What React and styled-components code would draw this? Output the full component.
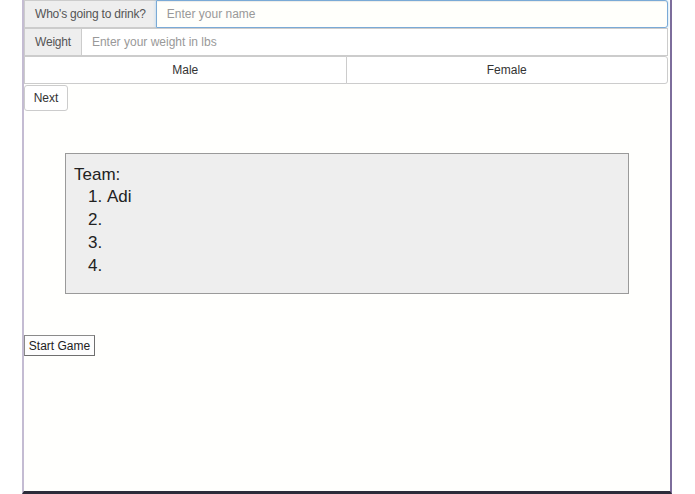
import styled, { createGlobalStyle } from "styled-components";

const GlobalStyle = createGlobalStyle`
  html, body {
    margin: 0;
    padding: 0;
    background: #ffffff;
    font-family: "Liberation Sans", Arial, sans-serif;
  }
`

const Frame = styled.div`
  box-sizing: border-box;
  margin-left: 22px;
  width: 650px;
  height: 494px;
  border-left: 2px solid #c4bcd2;
  border-right: 2px solid #7d6d9c;
  border-bottom: 3px solid #2c2c3a;
  background: #fffffd;
  display: flex;
  flex-direction: column;
`

const InputGroup = styled.div`
  display: flex;
  height: 28px;
  width: 644px;
`

const Addon = styled.span`
  box-sizing: border-box;
  display: flex;
  align-items: center;
  padding: 0 10px;
  background: #eeeeee;
  border: 1px solid #cccccc;
  border-right: none;
  color: #555555;
  font-size: 12px;
  letter-spacing: -0.2px;
  white-space: nowrap;
`

const TextInput = styled.input`
  box-sizing: border-box;
  flex: 1;
  height: 28px;
  padding: 0 10px;
  font-family: "Liberation Sans", Arial, sans-serif;
  font-size: 12px;
  color: #555;
  background: ${p => (p.$focus ? "#fffffb" : "#ffffff")};
  border: 1px solid ${p => (p.$focus ? "#7aaad6" : "#cccccc")};
  border-radius: ${p => (p.$focus ? "0 3px 3px 0" : "0")};
  box-shadow: ${p => (p.$focus ? "inset 0 1px 1px rgba(0,0,0,.075), 0 0 3px rgba(102,175,233,.5)" : "none")};
  outline: none;

  &::placeholder {
    color: #999999;
  }
`

const Toggle = styled.div`
  display: flex;
  width: 644px;
  height: 28px;
`

const ToggleButton = styled.button`
  box-sizing: border-box;
  flex: 1;
  height: 28px;
  background: #ffffff;
  border: 1px solid #cccccc;
  border-radius: ${p => (p.$last ? "0 3px 3px 0" : "0")};
  margin-left: ${p => (p.$last ? "-1px" : "0")};
  color: #333333;
  font-family: "Liberation Sans", Arial, sans-serif;
  font-size: 12px;
`

const NextButton = styled.button`
  box-sizing: border-box;
  align-self: flex-start;
  margin-top: 1px;
  width: 44px;
  height: 26px;
  padding: 0;
  background: #ffffff;
  border: 1px solid #cccccc;
  border-radius: 3px;
  color: #333333;
  font-family: "Liberation Sans", Arial, sans-serif;
  font-size: 12px;
`

const TeamBox = styled.div`
  box-sizing: border-box;
  margin: 42px 41px 0 41px;
  height: 141px;
  padding: 10px 8px;
  background: #eeeeee;
  border: 1px solid #9a9a9a;
  color: #222222;
  font-size: 17px;
`

const TeamTitle = styled.div`
  line-height: 21px;
`

const TeamList = styled.ol`
  margin: 0;
  padding-left: 33px;

  li {
    line-height: 23px;
  }
`

const StartButton = styled.button`
  box-sizing: border-box;
  align-self: flex-start;
  margin-top: 41px;
  width: 71px;
  height: 21px;
  padding: 0;
  background: #fdfdfd;
  border: 1px solid #8a8a8a;
  border-right-color: #6f6f6f;
  border-bottom-color: #6f6f6f;
  color: #222222;
  font-family: "Liberation Sans", Arial, sans-serif;
  font-size: 12px;
`

const team = ["Adi", "", "", ""]

function App() {
    return (
        <>
            <GlobalStyle/>
            <Frame>
                <InputGroup>
                    <Addon>Who's going to drink?</Addon>
                    <TextInput $focus placeholder="Enter your name"/>
                </InputGroup>
                <InputGroup>
                    <Addon>Weight</Addon>
                    <TextInput placeholder="Enter your weight in lbs"/>
                </InputGroup>
                <Toggle>
                    <ToggleButton>Male</ToggleButton>
                    <ToggleButton $last>Female</ToggleButton>
                </Toggle>
                <NextButton>Next</NextButton>
                <TeamBox>
                    <TeamTitle>Team:</TeamTitle>
                    <TeamList>
                        {team.map((name, i) => (
                            <li key={i}>{name}</li>
                        ))}
                    </TeamList>
                </TeamBox>
                <StartButton>Start Game</StartButton>
            </Frame>
        </>
    )
}

export default App;
